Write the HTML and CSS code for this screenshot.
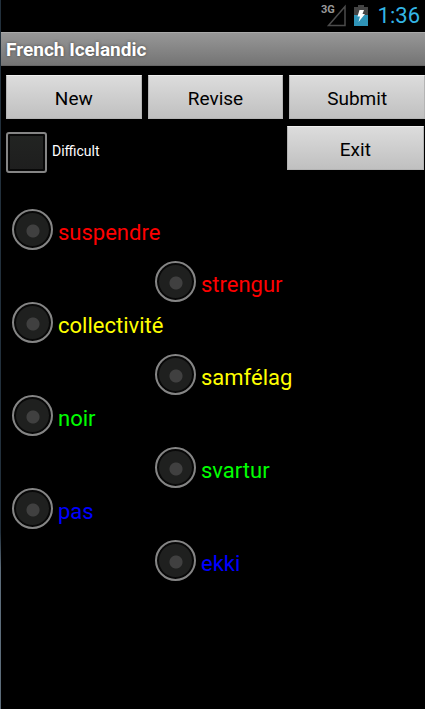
FILE: index.html
```html
<!DOCTYPE html>
<html lang="en">
    <head>
        <meta charset="UTF-8">
        <meta name="viewport" content="width=device-width, initial-scale=1.0">
        <title>French Icelandic</title>
        <link rel="stylesheet" href="styles.css">
    </head>
    <body>
        <div class="statusbar">
            <svg class="signal" width="26" height="24" viewBox="0 0 26 24">
                <text x="0" y="9" class="network">3G</text>
                <path d="M7.500 21.500H24V2.500Z" fill="none" stroke="#4b4b4b" stroke-width="1.500"/>
            </svg>
            <svg class="battery" width="14" height="22" viewBox="0 0 14 22">
                <path d="M4 0H10V2H14V10H0V2H4Z" fill="#444"/>
                <path d="M0 10H14V21H0Z" fill="#2f94b8"/>
                <path d="M5.500 5H10L8.500 9H11L4.500 17L6 11.500H3.500Z" fill="#fff"/>
            </svg>
            <span class="clock">1:36</span>
        </div>
        <h1 class="title">French Icelandic</h1>

        <form class="content">
            <div class="buttons">
                <button type="button">New</button>
                <button type="button">Revise</button>
                <button type="button">Submit</button>
            </div>
            <div class="options">
                <label class="difficult"><input type="checkbox" name="difficult"><span>Difficult</span></label>
                <button type="button">Exit</button>
            </div>

            <div class="words">
                <div class="pair red">
                    <label><input type="radio" name="french"><span>suspendre</span></label>
                    <label class="second"><input type="radio" name="icelandic"><span>strengur</span></label>
                </div>
                <div class="pair yellow">
                    <label><input type="radio" name="french"><span>collectivité</span></label>
                    <label class="second"><input type="radio" name="icelandic"><span>samfélag</span></label>
                </div>
                <div class="pair green">
                    <label><input type="radio" name="french"><span>noir</span></label>
                    <label class="second"><input type="radio" name="icelandic"><span>svartur</span></label>
                </div>
                <div class="pair blue">
                    <label><input type="radio" name="french"><span>pas</span></label>
                    <label class="second"><input type="radio" name="icelandic"><span>ekki</span></label>
                </div>
            </div>
        </form>
    </body>
</html>
```
FILE: styles.css
```css
* {
    box-sizing: border-box;
}
html {
    background-color: #000;
}
body {
    margin: 0;
    min-height: 100vh;
    border-left: 1px solid;
    border-image: linear-gradient(#22303c 75%, #5c6c7a 80%) 1;
    background-color: #000;
    color: white;
    font-family: Roboto, "Liberation Sans", sans-serif;
}
.statusbar {
    display: flex;
    align-items: center;
    justify-content: flex-end;
    height: 32px;
    padding-right: 5px;
}
.signal {
    margin-right: 7px;
}
.network {
    font-size: 11px;
    font-weight: bold;
    fill: #999;
}
.battery {
    margin-right: 10px;
}
.clock {
    color: #33b5e5;
    font-size: 22px;
    line-height: 32px;
}
.title {
    margin: 0;
    padding-left: 5px;
    height: 34px;
    border-top: 1px solid #aaa;
    border-bottom: 1px solid #666;
    background: linear-gradient(#979797, #747474);
    font-size: 19px;
    line-height: 33px;
    text-shadow: 0 0 3px #444;
}
.content {
    padding: 9px 0 0 5px;
}
.buttons {
    display: grid;
    grid-template-columns: repeat(3, 1fr);
    gap: 6px;
}
button {
    height: 44px;
    padding: 2px 0 0;
    border: 1px solid #b4b4b4;
    border-top-color: #eee;
    background: linear-gradient(#dcdcdc, #c0c0c0);
    color: #000;
    font-family: inherit;
    font-size: 19px;
}
.options {
    display: grid;
    grid-template-columns: 2fr 1fr;
    gap: 6px;
    align-items: start;
    margin-top: 7px;
    padding-right: 1px;
}
.difficult {
    display: flex;
    gap: 5px;
    margin-top: 6px;
    font-size: 14px;
    line-height: 38px;
}
input {
    appearance: none;
    flex: none;
    width: 41px;
    height: 41px;
    margin: 0;
    border: 2px solid #858585;
    border-radius: 3px;
    background: linear-gradient(#222422, #1e1e1e);
    box-shadow: inset 0 0 0 2px #080808;
}
input[type="radio"] {
    border-radius: 50%;
    background: radial-gradient(circle at 19px 20px, #404040 6px, #1f201f 7px);
}
.words {
    padding: 36px 0 0 6px;
}
.pair {
    display: grid;
    grid-template-columns: 143px 1fr;
    align-items: start;
}
.pair label {
    display: flex;
    gap: 5px;
    font-size: 22px;
    line-height: 26px;
}
.pair span {
    padding-top: 11px;
}
.pair .second {
    padding-top: 52px;
}
.red {
    color: #f00;
}
.yellow {
    color: #ff0;
}
.green {
    color: #0f0;
}
.blue {
    color: #00f;
}
```
